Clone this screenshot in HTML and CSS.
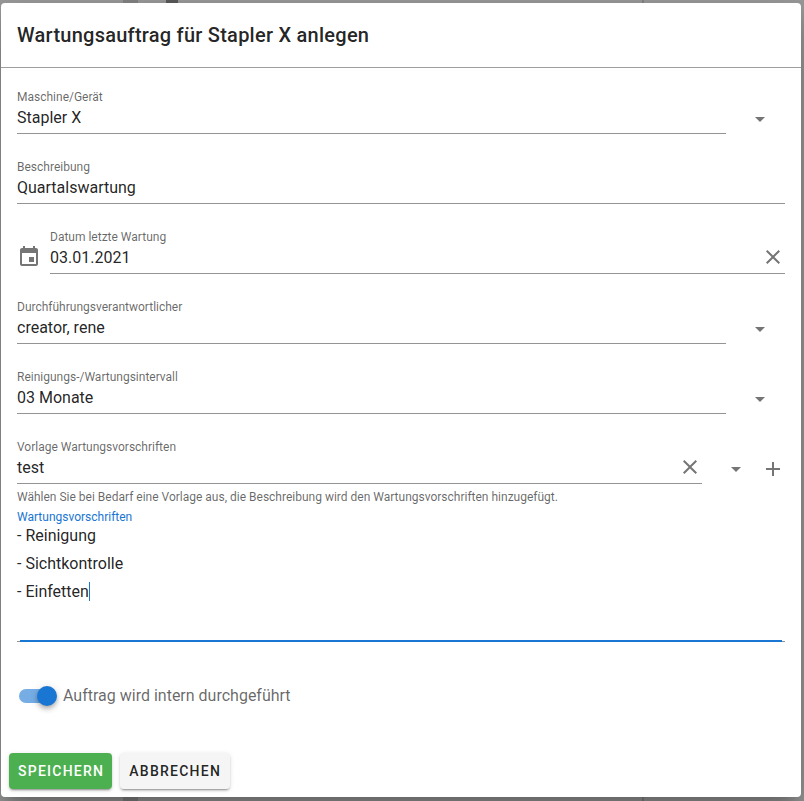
FILE: index.html
```html
<!DOCTYPE html>
<html lang="de">
<head>
<meta charset="utf-8">
<title>Wartungsauftrag</title>
<link rel="stylesheet" href="styles.css">
</head>
<body>
<div class="dialog">
  <header class="title">Wartungsauftrag für Stapler X anlegen</header>
  <div class="content">
    <div class="row">
      <div class="field"><label class="label">Maschine/Gerät</label><div class="value">Stapler X</div></div>
      <div class="append"><svg class="arrow" viewBox="0 0 24 24"><path d="M7 10l5 5 5-5z"/></svg></div>
    </div>
    <div class="row">
      <div class="field"><label class="label">Beschreibung</label><div class="value">Quartalswartung</div></div>
    </div>
    <div class="row">
      <svg class="cal" viewBox="0 0 24 24"><path d="M19 4h-1V2h-2v2H8V2H6v2H5c-1.100 0-2 .9-2 2v14c0 1.100.9 2 2 2h14c1.100 0 2-.9 2-2V6c0-1.100-.9-2-2-2zm0 16H5V9h14v11zM12 13h5v5h-5z"/></svg>
      <div class="field"><label class="label">Datum letzte Wartung</label>
        <div class="value with-icon"><span>03.01.2021</span><svg class="clear" viewBox="0 0 24 24"><path d="M19 6.410 17.590 5 12 10.590 6.410 5 5 6.410 10.590 12 5 17.590 6.410 19 12 13.410 17.590 19 19 17.590 13.410 12z"/></svg></div>
      </div>
    </div>
    <div class="row">
      <div class="field"><label class="label">Durchführungsverantwortlicher</label><div class="value">creator, rene</div></div>
      <div class="append"><svg class="arrow" viewBox="0 0 24 24"><path d="M7 10l5 5 5-5z"/></svg></div>
    </div>
    <div class="row">
      <div class="field"><label class="label">Reinigungs-/Wartungsintervall</label><div class="value">03 Monate</div></div>
      <div class="append"><svg class="arrow" viewBox="0 0 24 24"><path d="M7 10l5 5 5-5z"/></svg></div>
    </div>
    <div class="row row-vorlage">
      <div class="field"><label class="label">Vorlage Wartungsvorschriften</label>
        <div class="value with-icon"><span>test</span><svg class="clear" viewBox="0 0 24 24"><path d="M19 6.410 17.590 5 12 10.590 6.410 5 5 6.410 10.590 12 5 17.590 6.410 19 12 13.410 17.590 19 19 17.590 13.410 12z"/></svg></div>
      </div>
      <div class="append-two">
        <svg class="arrow" viewBox="0 0 24 24"><path d="M7 10l5 5 5-5z"/></svg>
        <svg class="plus" viewBox="0 0 24 24"><path d="M19 13h-6v6h-2v-6H5v-2h6V5h2v6h6z"/></svg>
      </div>
    </div>
    <div class="hint">Wählen Sie bei Bedarf eine Vorlage aus, die Beschreibung wird den Wartungsvorschriften hinzugefügt.</div>
    <div class="area">
      <label class="label label-active">Wartungsvorschriften</label>
      <div class="lines">
        <div>- Reinigung</div>
        <div>- Sichtkontrolle</div>
        <div class="caret-line">- Einfetten<span class="caret"></span></div>
      </div>
    </div>
    <div class="switch-row">
      <div class="switch"><span class="track"></span><span class="thumb"></span></div>
      <span class="switch-label">Auftrag wird intern durchgeführt</span>
    </div>
  </div>
  <footer class="actions">
    <button class="btn btn-save">Speichern</button>
    <button class="btn btn-cancel">Abbrechen</button>
  </footer>
</div>
</body>
</html>
```
FILE: styles.css
```css
html, body { margin: 0; height: 801px; overflow: hidden; }
body {
  background:
    linear-gradient(#5c5c5c, #5c5c5c) 166px 0 / 12px 3px no-repeat,
    linear-gradient(90deg, transparent 123px, #858585 123px, #858585 138px, transparent 138px, transparent 642px, #858585 642px, #858585 644px, transparent 644px),
    #9c9c9c;
  font-family: Roboto, sans-serif;
  color: rgba(0,0,0,.87);
  padding: 3px 3px 4px 1px;
  box-sizing: border-box;
}
.dialog { background: #fff; border-radius: 4px; height: 794px; display: flex; flex-direction: column; box-shadow: 0 11px 15px -7px rgba(0,0,0,.2), 0 24px 38px 3px rgba(0,0,0,.14), 0 9px 46px 8px rgba(0,0,0,.12); }
.title { box-sizing: border-box; padding: 20px 16px 0; font-size: 20px; line-height: 24px; font-weight: 500; letter-spacing: .25px; border-bottom: 1px solid #9e9e9e; flex: none; height: 65px; }
.content { flex: 1; padding: 17px 16px 0; display: flex; flex-direction: column; }
.row { display: flex; height: 70px; flex: none; }
.field { flex: 1; min-width: 0; height: 43px; border-bottom: 1px solid #949494; padding-top: 5px; }
.label { display: block; font-size: 12px; line-height: 14px; color: rgba(0,0,0,.6); }
.value { font-size: 16px; line-height: 24px; height: 24px; margin-top: 2px; }
.with-icon { display: flex; justify-content: space-between; align-items: flex-start; }
.append { width: 59px; flex: none; display: flex; justify-content: center; padding-top: 22px; height: 24px; }
.append .arrow { margin-left: 9px; }
.arrow { width: 24px; height: 24px; fill: #757575; display: block; flex: none; }
.cal { width: 24px; height: 24px; fill: #757575; margin: 19px 9px 0 0; flex: none; }
.clear { width: 24px; height: 24px; fill: #757575; display: block; margin-top: -1px; flex: none; }
.row-vorlage { height: 52px; }
.append-two { width: 83px; flex: none; display: flex; height: 24px; padding-top: 22px; justify-content: flex-end; gap: 13px; }
.plus { width: 24px; height: 24px; fill: #757575; display: block; flex: none; }
.hint { font-size: 12px; line-height: 14px; color: rgba(0,0,0,.6); margin-top: 3px; flex: none; }
.area { position: relative; margin-top: 6px; border-bottom: 1px solid #949494; height: 132px; flex: none; box-sizing: border-box; }
.area::after { content: ""; position: absolute; left: 3px; right: 3px; bottom: -1px; height: 2px; background: #1976d2; }
.label-active { color: #1976d2; }
.lines { font-size: 16px; line-height: 28px; margin-top: -2px; }
.caret { display: inline-block; width: 1px; height: 19px; background: #1976d2; vertical-align: -4px; }
.switch-row { display: flex; align-items: center; margin-top: 42px; }
.switch { position: relative; width: 38px; height: 20px; margin: 0 6px 0 2px; flex: none; }
.track { position: absolute; left: 0; top: 3px; width: 36px; height: 14px; border-radius: 7px; background: #1976d2; opacity: .6; }
.thumb { position: absolute; left: 18px; top: 0; width: 20px; height: 20px; border-radius: 50%; background: #1976d2; box-shadow: 0 2px 4px -1px rgba(0,0,0,.2), 0 4px 5px rgba(0,0,0,.14), 0 1px 10px rgba(0,0,0,.12); }
.switch-label { font-size: 16px; line-height: 24px; color: rgba(0,0,0,.6); }
.actions { display: flex; gap: 8px; padding: 0 8px 8px; flex: none; }
.btn { height: 36px; border: 0; border-radius: 4px; font: 500 14px/36px Roboto, sans-serif; letter-spacing: 1.25px; text-transform: uppercase; padding: 0 8px 0 9px; box-shadow: 0 3px 1px -2px rgba(0,0,0,.2), 0 2px 2px rgba(0,0,0,.14), 0 1px 5px rgba(0,0,0,.12); }
.btn-save { background: #4caf50; color: #fff; }
.btn-cancel { background: #f5f5f5; color: rgba(0,0,0,.87); padding-right: 9px; }
```
